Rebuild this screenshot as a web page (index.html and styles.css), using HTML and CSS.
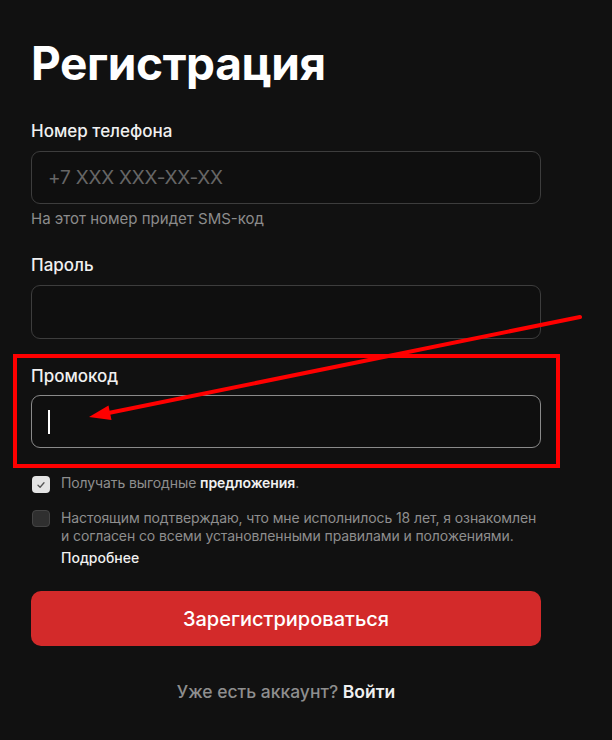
FILE: index.html
```html
<!DOCTYPE html>
<html lang="ru">
<head>
<meta charset="utf-8">
<link rel="stylesheet" href="styles.css">
</head>
<body>
<main class="page">
  <h1 class="title">Регистрация</h1>

  <div class="field">
    <label class="label">Номер телефона</label>
    <div class="input"><span class="placeholder">+7 XXX XXX-XX-XX</span></div>
    <div class="hint">На этот номер придет SMS-код</div>
  </div>

  <div class="field field-pass">
    <label class="label">Пароль</label>
    <div class="input"></div>
  </div>

  <div class="highlight">
    <label class="label">Промокод</label>
    <div class="input input-focus"><span class="caret"></span></div>
  </div>

  <div class="check-row check-one">
    <span class="box box-on">
      <svg width="10" height="10" viewBox="0 0 10 10"><path d="M2 5.2 L4.1 7.2 L8 2.8" fill="none" stroke="#555" stroke-width="1.3" stroke-linecap="round" stroke-linejoin="round"/></svg>
    </span>
    <span class="check-text">Получать выгодные <b class="strong">предложения</b>.</span>
  </div>

  <div class="check-row check-two">
    <span class="box box-off"></span>
    <div class="check-body">
      <span class="check-text">Настоящим подтверждаю, что мне исполнилось 18 лет, я ознакомлен и согласен со всеми установленными правилами и положениями.</span>
      <span class="more">Подробнее</span>
    </div>
  </div>

  <button class="submit">Зарегистрироваться</button>

  <p class="login">Уже есть аккаунт? <b class="login-link">Войти</b></p>
</main>

<svg class="arrow" width="612" height="740" viewBox="0 0 612 740">
  <line x1="580" y1="317" x2="106" y2="413.5" stroke="#ff0000" stroke-width="4" stroke-linecap="round"/>
  <polygon points="89,417 111.5,420 108.5,405.5" fill="#ff0000"/>
</svg>
</body>
</html>
```

FILE: styles.css
```css
* { box-sizing: border-box; }
html, body { margin: 0; padding: 0; }
body {
  background: #111111;
  width: 612px;
  height: 740px;
  overflow: hidden;
  position: relative;
  font-family: Inter, "Noto Sans", sans-serif;
  color: #f2f2f2;
}
.page {
  padding: 35px 0 0 31px;
  width: 541px;
  display: flex;
  flex-direction: column;
}
.title {
  margin: 0;
  font-size: 46px;
  line-height: 56px;
  font-weight: 700;
  letter-spacing: -0.4px;
  color: #ffffff;
}
.field { display: flex; flex-direction: column; margin-top: 30px; }
.field-pass { margin-top: 27px; }
.label {
  font-size: 17px;
  line-height: 20px;
  font-weight: 500;
  color: #f0f0f0;
  margin-bottom: 10px;
}
.input {
  height: 53px;
  border: 1px solid #3d3d3d;
  border-radius: 9px;
  background: #0f0f0f;
  display: flex;
  align-items: center;
  padding-left: 16px;
}
.field-pass .input { height: 54px; }
.input-focus { border-color: #8a8a8a; }
.placeholder { font-size: 19px; color: #666666; letter-spacing: -0.2px; }
.caret { width: 1.5px; height: 24px; background: #ffffff; }
.hint {
  margin-top: 6px;
  font-size: 15px;
  line-height: 18px;
  color: #8c8c8c;
}
.highlight {
  margin: 15px -19px 0 -18px;
  border: 4px solid #ff0000;
  padding: 8px 15px 16px 14px;
  display: flex;
  flex-direction: column;
}
.highlight .label { margin-bottom: 9px; }
.check-row { display: flex; gap: 11px; align-items: flex-start; }
.check-one { margin-top: 8px; padding-left: 1px; }
.check-two { margin-top: 17px; padding-left: 1px; }
.box {
  width: 18px;
  height: 17px;
  border-radius: 4px;
  flex: none;
  display: flex;
  align-items: center;
  justify-content: center;
}
.box-on { background: #e4e4e4; }
.box-off { background: #2f2f2f; border: 1px solid #444; }
.check-text {
  font-size: 14px;
  line-height: 18px;
  color: #8e8e8e;
  letter-spacing: -0.1px;
}
.check-one .check-text { margin-top: -2px; }
.check-two .check-text { margin-top: -1px; }
.strong { font-weight: 600; color: #f0f0f0; }
.check-body { display: flex; flex-direction: column; width: 482px; flex: none; }
.more {
  margin-top: 4px;
  font-size: 14px;
  line-height: 18px;
  font-weight: 500;
  color: #f0f0f0;
}
.submit {
  margin-top: 24px;
  height: 55px;
  width: 510px;
  border: none;
  border-radius: 10px;
  background: #d32a2a;
  color: #ffffff;
  font-family: Inter, "Noto Sans", sans-serif;
  font-size: 20px;
  font-weight: 500;
}
.login {
  margin: 36px 0 0;
  text-align: center;
  width: 510px;
  font-size: 17.5px;
  line-height: 20px;
  color: #8e8e8e;
  font-weight: 500;
}
.login-link { font-weight: 600; color: #f0f0f0; }
.arrow { position: absolute; left: 0; top: 0; pointer-events: none; }
```
